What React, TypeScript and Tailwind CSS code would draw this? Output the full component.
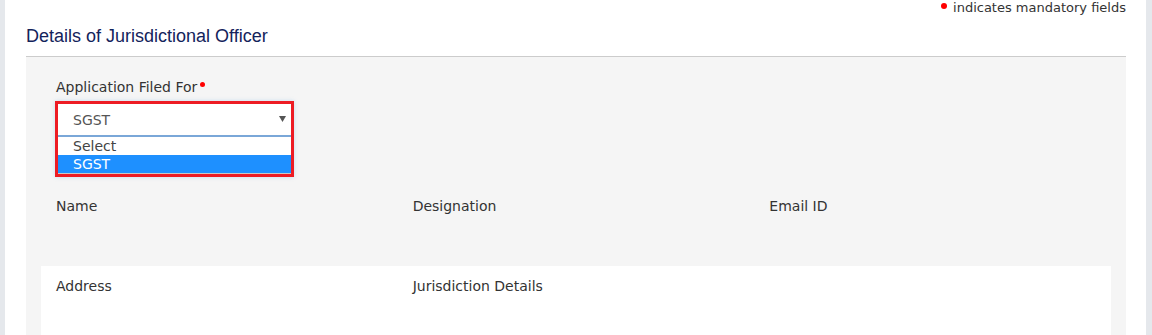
import React from 'react'

const sans = { fontFamily: '"DejaVu Sans", Verdana, sans-serif' }
const titleFont = { fontFamily: '"Liberation Sans", Arial, sans-serif' }

function RequiredDot({ className = '' }: { className?: string }) {
  return <span className={`inline-block rounded-full bg-[#ff0000] ${className}`} aria-hidden />
}

function OpenSelect() {
  return (
    <div className="-ml-px mt-[4px] w-[239px] border-[3px] border-[#ed1c24] shadow-[0_0_4px_rgba(102,175,233,0.35)]">
      <div className="flex h-[33px] items-center justify-between border-b-2 border-[#7aa7d8] bg-white pl-[15px] pr-[5px] text-[14px] text-[#555]">
        <span>SGST</span>
        <svg width="7" height="6" viewBox="0 0 7 6" className="mb-[2px]">
          <path d="M0 0h7L3.5 6z" fill="#555" />
        </svg>
      </div>
      <ul className="border-b border-[#c8c8c8] bg-white text-[14px] leading-[18px]">
        <li className="h-[18px] pl-[15px] text-[#444]">Select</li>
        <li className="h-[18px] bg-[#1e90ff] pl-[15px] text-white">SGST</li>
      </ul>
    </div>
  )
}

export default function App() {
  const officerCols = ['Name', 'Designation', 'Email ID']
  const addressCols = ['Address', 'Jurisdiction Details', '']

  return (
    <div className="flex h-[335px] w-full overflow-hidden bg-white" style={sans}>
      <div className="w-[5px] shrink-0 bg-[#e5e8ec]" />

      <div className="flex-1 pl-[21px] pr-[20px]">
        <p className="flex h-[16px] items-start justify-end text-[13px] leading-[16px] text-[#333]">
          <RequiredDot className="mr-[6px] mt-[3px] h-[6px] w-[6px]" />
          indicates mandatory fields
        </p>

        <h2
          className="mt-[8px] pb-[8px] text-[18px] leading-[24px] text-[#13235b]"
          style={titleFont}
        >
          Details of Jurisdictional Officer
        </h2>

        <div className="border-t border-[#cccccc] bg-[#f5f5f5] px-[15px] pt-[20px] text-[14px] leading-[20px] text-[#333]">
          <div className="px-[15px]">
            <label className="flex items-start">
              Application Filed For
              <RequiredDot className="ml-[3px] mt-[5px] h-[5px] w-[5px]" />
            </label>
            <OpenSelect />
          </div>

          <div className="mt-[19px] grid h-[70px] grid-cols-3">
            {officerCols.map((c) => (
              <div key={c} className="px-[15px]">
                {c}
              </div>
            ))}
          </div>

          <div className="grid h-[100px] grid-cols-3 bg-white pt-[10px]">
            {addressCols.map((c, i) => (
              <div key={i} className="px-[15px]">
                {c}
              </div>
            ))}
          </div>
        </div>
      </div>

      <div className="w-[6px] shrink-0 bg-[#e5e8ec]" />
    </div>
  )
}
